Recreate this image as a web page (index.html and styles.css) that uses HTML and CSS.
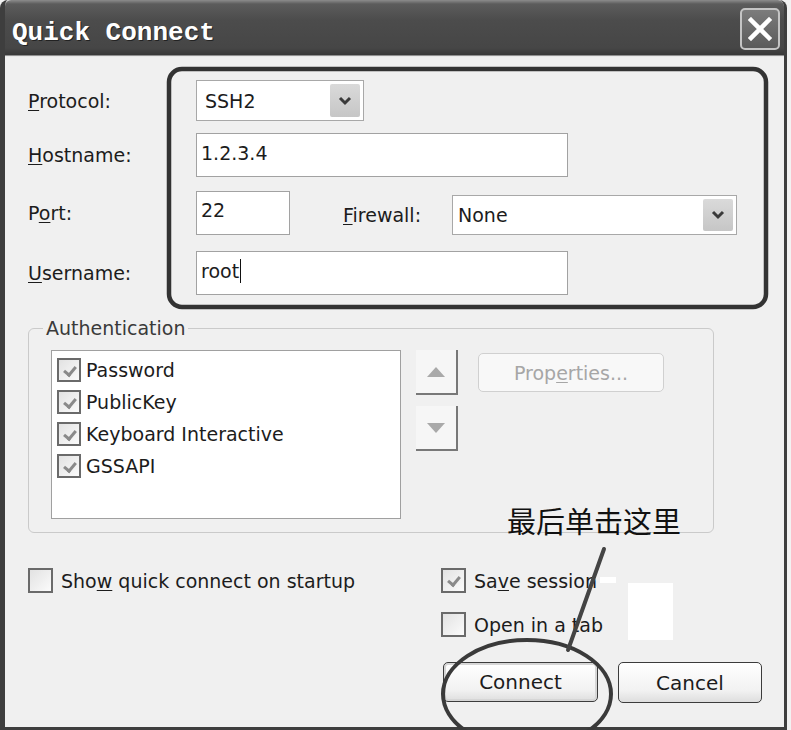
FILE: index.html
```html
<!DOCTYPE html>
<html lang="en">
<head>
    <meta charset="UTF-8">
    <meta name="viewport" content="width=device-width, initial-scale=1.0">
    <title>Quick Connect</title>
    <link rel="stylesheet" href="styles.css">
</head>
<body>
    <div class="window">
        <div class="titlebar">
            <span class="title">Quick Connect</span>
            <button class="close-btn">
                <svg width="24" height="24" viewBox="0 0 24 24"><path d="M3 3 L21 21 M21 3 L3 21" stroke="#fff" stroke-width="4.5" stroke-linecap="square"/></svg>
            </button>
        </div>
        <div class="dialog">
            <div class="form-row row-protocol">
                <label class="field-label"><u>P</u>rotocol:</label>
                <div class="select select-protocol">
                    <span>SSH2</span>
                    <span class="drop-btn"><svg width="14" height="10" viewBox="0 0 14 10"><path d="M2 2 L7 7 L12 2" stroke="#3a3a3a" stroke-width="3" fill="none"/></svg></span>
                </div>
            </div>
            <div class="form-row row-host">
                <label class="field-label"><u>H</u>ostname:</label>
                <div class="textbox textbox-wide">1.2.3.4</div>
            </div>
            <div class="form-row row-port">
                <label class="field-label">P<u>o</u>rt:</label>
                <div class="textbox textbox-port">22</div>
                <label class="firewall-label"><u>F</u>irewall:</label>
                <div class="select select-firewall">
                    <span>None</span>
                    <span class="drop-btn"><svg width="14" height="10" viewBox="0 0 14 10"><path d="M2 2 L7 7 L12 2" stroke="#3a3a3a" stroke-width="3" fill="none"/></svg></span>
                </div>
            </div>
            <div class="form-row row-user">
                <label class="field-label"><u>U</u>sername:</label>
                <div class="textbox textbox-wide"><span>root</span><span class="caret"></span></div>
            </div>

            <fieldset class="auth-group">
                <legend>Authentication</legend>
                <div class="auth-body">
                    <div class="auth-list">
                        <div class="auth-item"><span class="checkbox checked"></span><span>Password</span></div>
                        <div class="auth-item"><span class="checkbox checked"></span><span>PublicKey</span></div>
                        <div class="auth-item"><span class="checkbox checked"></span><span>Keyboard Interactive</span></div>
                        <div class="auth-item"><span class="checkbox checked"></span><span>GSSAPI</span></div>
                    </div>
                    <div class="arrow-col">
                        <button class="arrow-btn"><svg width="20" height="12" viewBox="0 0 20 12"><path d="M10 1 L19 11 L1 11 Z" fill="#a9a9a9"/></svg></button>
                        <button class="arrow-btn"><svg width="20" height="12" viewBox="0 0 20 12"><path d="M1 1 L19 1 L10 11 Z" fill="#a9a9a9"/></svg></button>
                    </div>
                    <button class="props-btn">Prop<u>e</u>rties...</button>
                </div>
            </fieldset>

            <div class="options">
                <div class="options-left">
                    <div class="option"><span class="checkbox"></span><span>Sho<u>w</u> quick connect on startup</span></div>
                </div>
                <div class="options-right">
                    <div class="option"><span class="checkbox checked"></span><span>Sa<u>v</u>e session</span></div>
                    <div class="option option-tab"><span class="checkbox"></span><span>Open in a tab</span></div>
                    <div class="btn-row">
                        <button class="dlg-btn btn-connect">Connect</button>
                        <button class="dlg-btn btn-cancel">Cancel</button>
                    </div>
                </div>
            </div>
        </div>
    </div>

    <!-- hand-drawn marks on top of the screenshot -->
    <div class="note">最后单击这里</div>
    <svg class="marks" width="791" height="730" viewBox="0 0 791 730">
        <rect x="169" y="69" width="597" height="238" rx="13" fill="none" stroke="#333" stroke-width="4.5"/>
        <rect x="628" y="583" width="45" height="57" fill="#fff"/>
        <rect x="600" y="577" width="16" height="6" fill="#fff"/>
        <ellipse cx="527" cy="694" rx="84" ry="54" fill="none" stroke="#3a3a3a" stroke-width="4"/>
        <path d="M604 549 L568 650" stroke="#444" stroke-width="4" stroke-linecap="round"/>
    </svg>
</body>
</html>
```

FILE: styles.css
```css
* {
    box-sizing: border-box;
}
body {
    margin: 0;
    width: 791px;
    height: 730px;
    overflow: hidden;
    position: relative;
    background: #f2f2f2;
    font-family: 'DejaVu Sans', Verdana, sans-serif;
    font-size: 19px;
    color: #1c1c1c;
}
u {
    text-decoration-thickness: 1px;
    text-underline-offset: 2px;
}
.window {
    width: 787px;
    height: 730px;
    display: flex;
    flex-direction: column;
    background: #f0f0f0;
    border-left: 5px solid #3e3e3e;
    border-right: 3px solid #3e3e3e;
    border-bottom: 3px solid #3e3e3e;
    border-radius: 8px 8px 0 0;
}
.titlebar {
    height: 57px;
    display: flex;
    align-items: center;
    justify-content: space-between;
    padding: 3px 4px 0 7px;
    background: linear-gradient(#8c8c8c 0, #5c5c5c 4px, #4c4c4c 20px, #464646 48px, #383838 55px, #e8e8e8 56px);
    border-radius: 6px 6px 0 0;
}
.title {
    padding-top: 5px;
    font-family: 'Liberation Mono', 'DejaVu Sans Mono', monospace;
    font-weight: bold;
    font-size: 26px;
    color: #fff;
    text-shadow: 1px 1px 0 #222;
}
.close-btn {
    width: 40px;
    height: 42px;
    margin-top: -2px;
    padding: 0;
    display: flex;
    align-items: center;
    justify-content: center;
    border: 2px solid #c4c4c4;
    border-radius: 5px;
    background: linear-gradient(#7c7c7c, #5a5a5a);
}
.dialog {
    flex: 1;
    padding: 23px 0 0 23px;
}
.form-row {
    display: flex;
    align-items: center;
}
.field-label {
    width: 168px;
}
.row-protocol {
    height: 41px;
}
.row-host {
    margin-top: 12px;
    height: 44px;
}
.row-port {
    margin-top: 14px;
    height: 44px;
}
.row-user {
    margin-top: 16px;
    height: 44px;
}
.textbox {
    height: 100%;
    display: flex;
    align-items: center;
    padding: 0 4px 4px;
    background: #fff;
    border: 1px solid #a2a2a2;
}
.textbox-wide {
    width: 372px;
}
.textbox-port {
    width: 94px;
    padding-bottom: 7px;
}
.caret {
    display: inline-block;
    width: 1px;
    height: 24px;
    margin-left: 1px;
    background: #111;
}
.select {
    display: flex;
    align-items: center;
    justify-content: space-between;
    padding: 3px 3px 3px 8px;
    background: #fff;
    border: 1px solid #a8a8a8;
}
.select-protocol {
    width: 168px;
    height: 41px;
}
.select-firewall {
    width: 285px;
    height: 40px;
    align-self: flex-end;
    padding-left: 5px;
}
.drop-btn {
    width: 30px;
    height: 100%;
    display: flex;
    align-items: center;
    justify-content: center;
    background: linear-gradient(#dadada, #c6c6c6);
    border-radius: 2px;
}
.firewall-label {
    width: 109px;
    margin-left: 53px;
    padding-top: 4px;
}
.auth-group {
    width: 686px;
    margin: 22px 0 0;
    padding: 11px 0 13px 22px;
    min-width: 0;
    border: 1px solid #cacaca;
    border-radius: 6px;
}
.auth-group legend {
    margin-left: -8px;
    padding: 0 3px;
    line-height: 22px;
    color: #3a3a3a;
}
.auth-body {
    display: flex;
    align-items: flex-start;
}
.auth-list {
    width: 350px;
    height: 169px;
    padding: 3px 5px;
    background: #fff;
    border: 1px solid #a0a0a0;
}
.auth-item {
    display: flex;
    align-items: center;
    gap: 5px;
    height: 32px;
}
.checkbox {
    width: 25px;
    height: 25px;
    flex-shrink: 0;
    border: 2px solid #6a6a6a;
    background: linear-gradient(135deg, #e2e2e2, #fbfbfb);
    position: relative;
}
.auth-item .checkbox {
    width: 24px;
    height: 24px;
}
.checkbox.checked::after {
    content: '';
    position: absolute;
    left: 7px;
    top: 4px;
    width: 5px;
    height: 9px;
    border-right: 3px solid #8a8a8a;
    border-bottom: 3px solid #8a8a8a;
    transform: rotate(40deg);
}
.arrow-col {
    display: flex;
    flex-direction: column;
    gap: 11px;
    margin-left: 15px;
}
.arrow-btn {
    width: 42px;
    height: 45px;
    padding: 0;
    display: flex;
    align-items: center;
    justify-content: center;
    background: #f6f6f6;
    border: none;
    border-right: 2px solid #787878;
    border-bottom: 2px solid #787878;
}
.props-btn {
    width: 186px;
    height: 39px;
    margin: 3px 0 0 20px;
    font-family: inherit;
    font-size: 19px;
    color: #a6a6a6;
    background: #f8f8f8;
    border: 1px solid #d0d0d0;
    border-radius: 5px;
}
.options {
    display: flex;
    margin-top: 35px;
}
.options-left {
    width: 413px;
}
.option {
    display: flex;
    align-items: center;
    gap: 8px;
    height: 25px;
}
.option-tab {
    margin-top: 19px;
}
.btn-row {
    display: flex;
    gap: 20px;
    margin: 25px 0 0 2px;
}
.dlg-btn {
    height: 40px;
    font-family: inherit;
    font-size: 20px;
    color: #1c1c1c;
    background: linear-gradient(#ffffff, #f2f2f2 70%, #dedede);
    border: 1px solid #3c3c3c;
    border-radius: 5px;
}
.btn-connect {
    width: 155px;
    box-shadow: inset 0 0 0 2px #d6d6d6;
}
.btn-cancel {
    width: 144px;
    height: 41px;
}
.note {
    position: absolute;
    left: 507px;
    top: 502px;
    font-family: 'Noto Sans CJK SC', sans-serif;
    font-size: 29px;
    line-height: 36px;
    color: #111;
}
.marks {
    position: absolute;
    left: 0;
    top: 0;
    pointer-events: none;
}
```
